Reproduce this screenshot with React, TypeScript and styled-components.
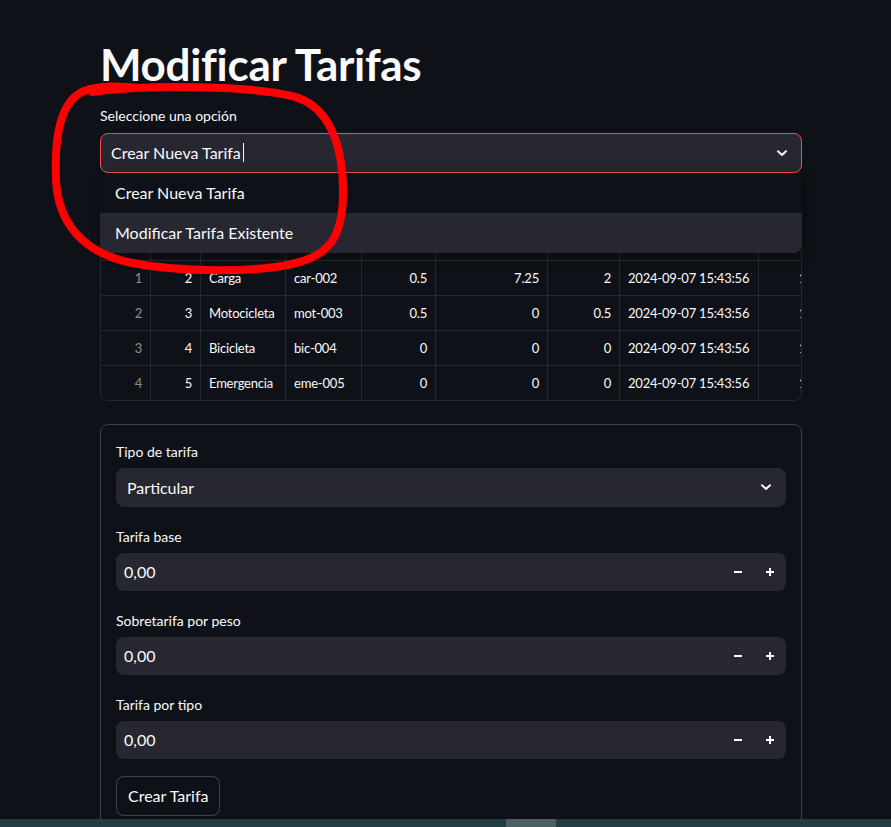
import React from 'react';
import styled, { createGlobalStyle } from 'styled-components';

// global
const GlobalStyle = createGlobalStyle`
  html, body {
    margin: 0;
    padding: 0;
    background: #0e1117;
    overflow: hidden;
  }
  body {
    font-family: Lato, "Noto Sans", sans-serif;
    color: #fafafa;
  }
  * {
    box-sizing: border-box;
  }
`;

// page
const Page = styled.div`
  position: relative;
  width: 891px;
  height: 827px;
  overflow: hidden;
`;

const Main = styled.main`
  display: flex;
  flex-direction: column;
  width: 702px;
  margin-left: 100px;
  padding-top: 38px;
`;

const Title = styled.h1`
  margin: 0 0 14px;
  font-size: 44px;
  line-height: 1.2;
  font-weight: 700;
  letter-spacing: -0.3px;
  color: #fafafa;
`;

const Field = styled.div`
  display: flex;
  flex-direction: column;
  position: relative;
`;

const Label = styled.label<{ $top?: boolean }>`
  display: block;
  height: ${(p) => (p.$top ? 22 : 20)}px;
  line-height: ${(p) => (p.$top ? 22 : 20)}px;
  font-size: 14px;
  margin-bottom: 6px;
  color: #fafafa;
`;

const SelectBox = styled.div<{ $focused?: boolean }>`
  display: flex;
  align-items: center;
  justify-content: space-between;
  height: ${(p) => (p.$focused ? 40 : 39)}px;
  padding: 0 12px 0 10px;
  background: #262730;
  border: 1px solid ${(p) => (p.$focused ? '#ff4b4b' : '#262730')};
  border-radius: 8px;
  font-size: 16px;
`;

const SelectValue = styled.span`
  display: flex;
  align-items: center;
`;

const Caret = styled.span`
  display: inline-block;
  width: 1px;
  height: 19px;
  margin-left: 2px;
  background: #fafafa;
`;

const Menu = styled.ul`
  position: absolute;
  top: 100%;
  left: 0;
  right: 0;
  z-index: 5;
  margin: 0;
  padding: 0;
  list-style: none;
  background: #0e1117;
  border-radius: 0 0 8px 8px;
  overflow: hidden;
  box-shadow: 4px 4px 12px rgba(0, 0, 0, 0.35);
`;

const MenuItem = styled.li<{ $active?: boolean }>`
  display: flex;
  align-items: center;
  height: 40px;
  padding-left: 15px;
  font-size: 16px;
  background: ${(p) => (p.$active ? '#262730' : '#0e1117')};
`;

// table
const TableWrap = styled.div`
  margin-top: 17px;
  width: 702px;
  overflow: hidden;
  border: 1px solid rgba(250, 250, 250, 0.1);
  border-radius: 8px;
`;

const Table = styled.table`
  width: 714px;
  border-collapse: collapse;
  table-layout: fixed;
  font-size: 13px;
  letter-spacing: -0.2px;
  margin: -1px 0 -1px -1px;
`;

const Cell = styled.td<{ $align?: 'left' | 'right'; $muted?: boolean }>`
  height: 35px;
  padding: 0 8px;
  white-space: nowrap;
  overflow: hidden;
  text-align: ${(p) => p.$align || 'left'};
  color: ${(p) => (p.$muted ? 'rgba(250, 250, 250, 0.55)' : '#fafafa')};
  border: 1px solid rgba(250, 250, 250, 0.1);
`;

const HeadCell = styled(Cell).attrs({ as: 'th' })`
  font-weight: 400;
  color: rgba(250, 250, 250, 0.6);
`;

// form
const FormBox = styled.form`
  display: flex;
  flex-direction: column;
  gap: 20px;
  margin-top: 23px;
  padding: 17px 15px 40px;
  border: 1px solid rgba(250, 250, 250, 0.2);
  border-radius: 8px;
`;

const NumberBox = styled.div`
  display: flex;
  align-items: center;
  height: 38px;
  padding-left: 8px;
  background: #262730;
  border-radius: 8px;
  font-size: 16px;
`;

const NumberValue = styled.span`
  flex: 1;
`;

const StepButton = styled.button`
  display: flex;
  align-items: center;
  justify-content: center;
  width: 32px;
  height: 38px;
  padding: 0;
  border: none;
  background: transparent;
  color: #fafafa;
`;

const SubmitButton = styled.button`
  align-self: flex-start;
  height: 40px;
  padding: 0 11px;
  margin-top: -3px;
  background: #0e1117;
  border: 1px solid rgba(250, 250, 250, 0.2);
  border-radius: 8px;
  color: #fafafa;
  font-family: inherit;
  font-size: 16px;
`;

// overlays
const Annotation = styled.svg`
  position: absolute;
  top: 0;
  left: 0;
  pointer-events: none;
  z-index: 10;
`;

const BottomBar = styled.div`
  position: absolute;
  left: 0;
  right: 0;
  bottom: 0;
  height: 8px;
  background: #233b44;
  z-index: 20;
`;

const BarThumb = styled.div`
  position: absolute;
  left: 506px;
  top: 0;
  width: 52px;
  height: 8px;
  background: #4e5e65;
  border-right: 2px solid #2c3b41;
`;

const Chevron = () => (
  <svg width="14" height="14" viewBox="0 0 14 14">
    <path d="M3 5.2 L7 9 L11 5.2" fill="none" stroke="#fafafa" strokeWidth="2" strokeLinecap="round" strokeLinejoin="round" />
  </svg>
);

const Minus = () => (
  <svg width="10" height="10" viewBox="0 0 10 10">
    <rect x="1" y="4" width="8" height="2" fill="#fafafa" />
  </svg>
);

const Plus = () => (
  <svg width="10" height="10" viewBox="0 0 10 10">
    <rect x="1" y="4" width="8" height="2" fill="#fafafa" />
    <rect x="4" y="1" width="2" height="8" fill="#fafafa" />
  </svg>
);

const columns = [50, 50, 85, 76, 74, 112, 72, 139, 56];
const headers = ['', 'id', 'tipo', 'codigo', 'base', 'peso', 'tipo', 'fecha', 'activo'];
const date = '2024-09-07 15:43:56';

const rows = [
  ['0', '1', 'Particular', 'par-001', '0.5', '0', '1', date, '1'],
  ['1', '2', 'Carga', 'car-002', '0.5', '7.25', '2', date, '1'],
  ['2', '3', 'Motocicleta', 'mot-003', '0.5', '0', '0.5', date, '1'],
  ['3', '4', 'Bicicleta', 'bic-004', '0', '0', '0', date, '1'],
  ['4', '5', 'Emergencia', 'eme-005', '0', '0', '0', date, '1'],
];

const leftCols = [2, 3, 7];

const fields = ['Tarifa base', 'Sobretarifa por peso', 'Tarifa por tipo'];

const App: React.FC = () => {
  return (
    <Page>
      <GlobalStyle />
      <Main>
        <Title>Modificar Tarifas</Title>
        <Field>
          <Label $top>Seleccione una opción</Label>
          <SelectBox $focused>
            <SelectValue>
              Crear Nueva Tarifa
              <Caret />
            </SelectValue>
            <Chevron />
          </SelectBox>
          <Menu>
            <MenuItem>Crear Nueva Tarifa</MenuItem>
            <MenuItem $active>Modificar Tarifa Existente</MenuItem>
          </Menu>
        </Field>

        <TableWrap>
          <Table>
            <colgroup>
              {columns.map((w, i) => (
                <col key={i} style={{ width: w }} />
              ))}
            </colgroup>
            <thead>
              <tr>
                {headers.map((h, i) => (
                  <HeadCell key={i} $align="left">{h}</HeadCell>
                ))}
              </tr>
            </thead>
            <tbody>
              {rows.map((r, ri) => (
                <tr key={ri}>
                  {r.map((c, ci) => (
                    <Cell key={ci} $align={leftCols.includes(ci) ? 'left' : 'right'} $muted={ci === 0}>
                      {c}
                    </Cell>
                  ))}
                </tr>
              ))}
            </tbody>
          </Table>
        </TableWrap>

        <FormBox>
          <Field>
            <Label>Tipo de tarifa</Label>
            <SelectBox>
              <SelectValue>Particular</SelectValue>
              <Chevron />
            </SelectBox>
          </Field>
          {fields.map((f) => (
            <Field key={f}>
              <Label>{f}</Label>
              <NumberBox>
                <NumberValue>0,00</NumberValue>
                <StepButton type="button"><Minus /></StepButton>
                <StepButton type="button"><Plus /></StepButton>
              </NumberBox>
            </Field>
          ))}
          <SubmitButton type="button">Crear Tarifa</SubmitButton>
        </FormBox>
      </Main>

      <Annotation width="891" height="827" viewBox="0 0 891 827">
        <path
          d="M92 92 C150 84 250 86 292 96 C332 106 343 150 343 192 C343 236 330 256 292 264 C250 273 180 272 132 263 C82 253 58 222 56 180 C54 132 62 100 84 91 C100 85 120 86 140 88"
          fill="none"
          stroke="#ff0000"
          strokeWidth="8"
          strokeLinecap="round"
          strokeLinejoin="round"
        />
      </Annotation>

      <BottomBar>
        <BarThumb />
      </BottomBar>
    </Page>
  );
};

export default App;
